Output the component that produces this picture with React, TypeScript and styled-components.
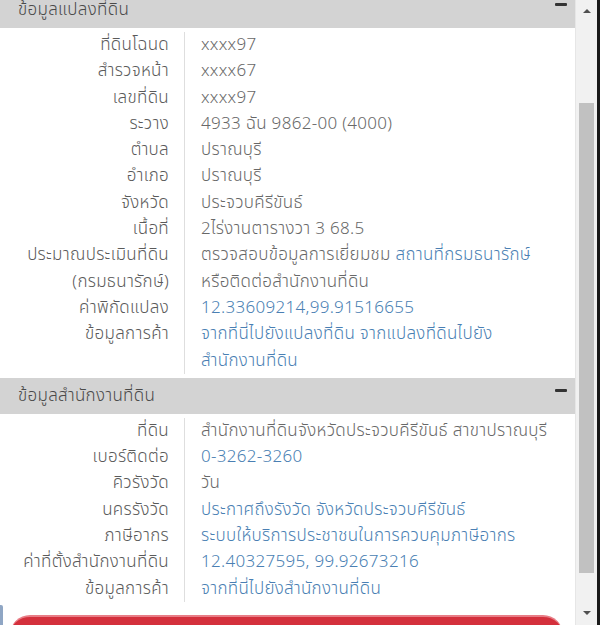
import React from "react";
import styled, { createGlobalStyle } from "styled-components";

const Global = createGlobalStyle`
  html, body { margin: 0; padding: 0; background: #ffffff; overflow: hidden; }
  body { font-family: "Noto Sans Thai", "Noto Sans", "DejaVu Sans", sans-serif; }
`;

const Frame = styled.div`
  width: 600px;
  height: 625px;
  display: flex;
  overflow: hidden;
  background: #ffffff;
`;

const Viewport = styled.div`
  width: 575px;
  height: 625px;
  overflow: hidden;
  display: flex;
  flex-direction: column;
  position: relative;
`;

const Scroller = styled.div`
  margin-top: -8px;
  display: flex;
  flex-direction: column;
`;

const Header = styled.div`
  height: 36px;
  background: #d3d3d3;
  display: flex;
  justify-content: space-between;
  padding: 0 8px 0 18px;
  box-sizing: border-box;
  color: #4a4a4a;
  font-size: 17px;
  font-weight: 300;
  letter-spacing: 0.3px;
  line-height: 36px;
`;

const Minus = styled.span`
  width: 12px;
  height: 3px;
  background: #333;
  border-radius: 1px;
  margin-top: 11px;
`;

const Body = styled.div<{ $pad: number }>`
  display: grid;
  grid-template-columns: 185px 1fr;
  padding: ${(p) => p.$pad}px 0 4px;
  font-size: 17px;
  font-weight: 300;
  letter-spacing: 0.3px;
  line-height: 26.3px;
`;

const Label = styled.div`
  text-align: right;
  padding-right: 15px;
  border-right: 1px solid #dedede;
  color: #5a5a5a;
  white-space: nowrap;
`;

const Value = styled.div`
  padding-left: 16px;
  padding-right: 6px;
  color: #686868;
  white-space: nowrap;
`;

const Link = styled.span`
  color: #4a7fb3;
`;

const Footer = styled.div`
  display: flex;
  padding: 9px 12px 0 10px;
`;

const RedButton = styled.div`
  flex: 1;
  height: 40px;
  background: #d4303c;
  border-top: 2px solid #e87d86;
  border-radius: 20px;
`;

const SideTab = styled.div`
  position: absolute;
  left: 0;
  bottom: 0;
  width: 3px;
  height: 20px;
  background: #8fa6c4;
  border-radius: 0 2px 0 0;
`;

const Scrollbar = styled.div`
  width: 22px;
  height: 625px;
  background: #f1f1f1;
  border-left: 1px solid #e6e6e6;
  box-sizing: border-box;
  display: flex;
  flex-direction: column;
  align-items: center;
`;

const Arrow = styled.div<{ $down?: boolean }>`
  width: 0;
  height: 0;
  border-left: 4px solid transparent;
  border-right: 4px solid transparent;
  ${(p) =>
    p.$down
      ? "border-top: 4px solid #505050; margin-top: auto; margin-bottom: 10px;"
      : "border-bottom: 4px solid #505050; margin-top: 9px;"}
`;

const Thumb = styled.div`
  width: 15px;
  height: 470px;
  background: #c1c1c1;
  margin-top: 90px;
`;

const Edge = styled.div`
  width: 3px;
  height: 625px;
  background: #1a1a1a;
`;

type Row = [string, React.ReactNode];

const land: Row[] = [
  ["ที่ดินโฉนด", "xxxx97"],
  ["สำรวจหน้า", "xxxx67"],
  ["เลขที่ดิน", "xxxx97"],
  ["ระวาง", "4933 ฉัน 9862-00 (4000)"],
  ["ตำบล", "ปราณบุรี"],
  ["อำเภอ", "ปราณบุรี"],
  ["จังหวัด", "ประจวบคีรีขันธ์"],
  ["เนื้อที่", "2ไร่งานตารางวา 3 68.5"],
  [
    "ประมาณประเมินที่ดิน",
    <>
      ตรวจสอบข้อมูลการเยี่ยมชม <Link>สถานที่กรมธนารักษ์</Link>
    </>,
  ],
  ["(กรมธนารักษ์)", "หรือติดต่อสำนักงานที่ดิน"],
  ["ค่าพิกัดแปลง", <Link>12.33609214,99.91516655</Link>],
  [
    "ข้อมูลการค้า",
    <Link>
      จากที่นี่ไปยังแปลงที่ดิน จากแปลงที่ดินไปยัง
      <br />
      สำนักงานที่ดิน
    </Link>,
  ],
];

const office: Row[] = [
  ["ที่ดิน", "สำนักงานที่ดินจังหวัดประจวบคีรีขันธ์ สาขาปราณบุรี"],
  ["เบอร์ติดต่อ", <Link>0-3262-3260</Link>],
  ["คิวรังวัด", "วัน"],
  ["นครรังวัด", <Link>ประกาศถึงรังวัด จังหวัดประจวบคีรีขันธ์</Link>],
  ["ภาษีอากร", <Link>ระบบให้บริการประชาชนในการควบคุมภาษีอากร</Link>],
  ["ค่าที่ตั้งสำนักงานที่ดิน", <Link>12.40327595, 99.92673216</Link>],
  ["ข้อมูลการค้า", <Link>จากที่นี่ไปยังสำนักงานที่ดิน</Link>],
];

const Section = ({ title, rows, pad }: { title: string; rows: Row[]; pad: number }) => (
  <>
    <Header>
      <span>{title}</span>
      <Minus />
    </Header>
    <Body $pad={pad}>
      {rows.map(([l, v], i) => (
        <React.Fragment key={i}>
          <Label>{l}</Label>
          <Value>{v}</Value>
        </React.Fragment>
      ))}
    </Body>
  </>
);

export default function App() {
  return (
    <>
      <Global />
      <Frame>
        <Viewport>
          <Scroller>
            <Section title="ข้อมูลแปลงที่ดิน" rows={land} pad={4} />
            <Section title="ข้อมูลสำนักงานที่ดิน" rows={office} pad={4} />
            <Footer>
              <RedButton />
            </Footer>
          </Scroller>
          <SideTab />
        </Viewport>
        <Scrollbar>
          <Arrow />
          <Thumb />
          <Arrow $down />
        </Scrollbar>
        <Edge />
      </Frame>
    </>
  );
}
